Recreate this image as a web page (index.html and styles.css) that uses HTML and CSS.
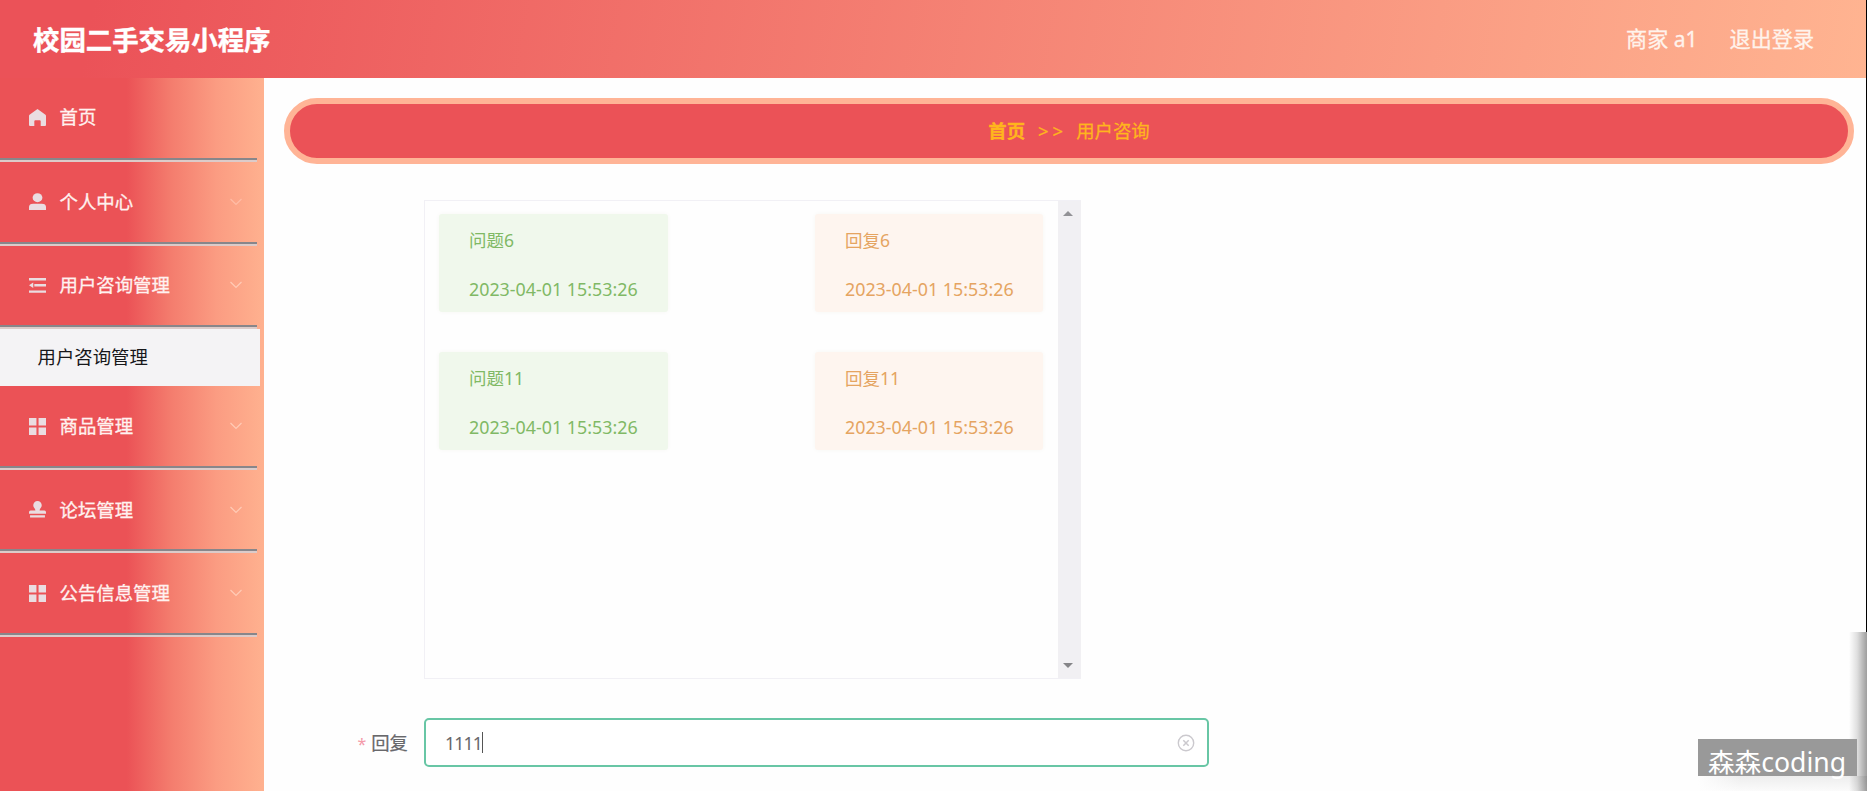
FILE: index.html
```html
<!DOCTYPE html>
<html lang="zh-CN">
<head>
<meta charset="utf-8">
<title>校园二手交易小程序</title>
<link rel="stylesheet" href="styles.css">
</head>
<body>
<svg class="defs" width="0" height="0">
  <symbol id="chevron" viewBox="0 0 14 8"><path d="M1.5 1 7 6.5 12.500 1" fill="none" stroke="currentColor" stroke-width="1.200"/></symbol>
  <symbol id="grid" viewBox="0 0 16 16"><path d="M0 0h7v7H0zM9 0h7v7H9zM0 9h7v7H0zM9 9h7v7H9z" fill="currentColor"/></symbol>
</svg>
<header class="header">
  <h1 class="brand">校园二手交易小程序</h1>
  <nav class="account"><span>商家 a1</span><span>退出登录</span></nav>
</header>
<div class="body">
  <aside class="sidebar">
    <div class="item first"><svg class="icon" viewBox="0 0 16 16"><path d="M8 0 15.500 5.500Q16 6 16 6.700V15q0 1-1 1h-4v-4.500a1 1 0 0 0-1-1H6a1 1 0 0 0-1 1V16H1q-1 0-1-1V6.700Q0 6 .5 5.500z" fill="currentColor"/></svg><span>首页</span></div>
    <div class="item"><svg class="icon" viewBox="0 0 16 17.500" preserveAspectRatio="none"><circle cx="8" cy="4.800" r="4.600" fill="currentColor"/><path d="M0 17.500v-3Q0 11 4 11h8q4 0 4 3.500v3z" fill="currentColor"/></svg><span>个人中心</span><svg class="arrow faint"><use href="#chevron"/></svg></div>
    <div class="item"><svg class="icon" viewBox="0 0 16 16"><path d="M0 1h16v2.200H0zM5 6.700h11v2.200H5zM0 12.600h16v2.200H0zM0 7.800 4 5.200v5.200z" fill="currentColor"/></svg><span>用户咨询管理</span><svg class="arrow"><use href="#chevron"/></svg></div>
    <div class="subitem">用户咨询管理</div>
    <div class="item"><svg class="icon"><use href="#grid"/></svg><span>商品管理</span><svg class="arrow"><use href="#chevron"/></svg></div>
    <div class="item"><svg class="icon" viewBox="0 0 16 16"><path d="M8 0a4 4 0 0 1 4 4c0 2.300-2 3-2 5h4.500Q16 9 16 10.500V12H0v-1.500Q0 9 1.500 9H6c0-2-2-2.700-2-5a4 4 0 0 1 4-4zM1 13.500h14V15.500H1z" fill="currentColor"/></svg><span>论坛管理</span><svg class="arrow"><use href="#chevron"/></svg></div>
    <div class="item"><svg class="icon"><use href="#grid"/></svg><span>公告信息管理</span><svg class="arrow"><use href="#chevron"/></svg></div>
  </aside>
  <main class="main">
    <div class="breadcrumb"><b>首页</b><span class="sep">&gt;&gt;</span><span>用户咨询</span></div>
    <div class="chat">
      <div class="messages">
        <div class="card ask"><p>问题6</p><p class="date">2023-04-01 15:53:26</p></div>
        <div class="card reply"><p>回复6</p><p class="date">2023-04-01 15:53:26</p></div>
        <div class="card ask"><p>问题11</p><p class="date">2023-04-01 15:53:26</p></div>
        <div class="card reply"><p>回复11</p><p class="date">2023-04-01 15:53:26</p></div>
      </div>
      <div class="scrollbar"><i class="up"></i><i class="down"></i></div>
    </div>
    <div class="form-row">
      <label class="label"><span class="star">*</span>回复</label>
      <div class="input"><span>1111</span><i class="caret"></i>
        <svg class="clear" viewBox="0 0 18 18"><g fill="none" stroke="currentColor"><circle cx="9" cy="9" r="7.700" stroke-width="1.400"/><path d="m6.300 6.300 5.400 5.400m0-5.400-5.400 5.400" stroke-width="1.500"/></g></svg>
      </div>
    </div>
  </main>
</div>
<div class="edge-line"></div>
<div class="bottom-shade"></div>
<div class="edge-shadow"></div>
<div class="watermark">森森coding</div>
</body>
</html>
```
FILE: styles.css
```css
* { box-sizing: border-box; }
body {
  margin: 0;
  width: 1867px;
  height: 791px;
  overflow: hidden;
  position: relative;
  background: #fefefe;
  font-family: "Noto Sans", "Noto Sans CJK SC", sans-serif;
  font-size: 18.400px;
}
p, h1 { margin: 0; }
.defs { display: block; position: absolute; }
.header {
  height: 78px;
  padding: 1px 53px 0 33px;
  display: flex;
  align-items: center;
  justify-content: space-between;
  background: linear-gradient(100deg, #eb5258 0%, #eb5258 5%, #ffb491 100%);
  color: #fff;
}
.brand { font-size: 26.400px; line-height: 40px; font-weight: 700; -webkit-text-stroke: .4px #fff; }
.account { display: flex; gap: 32px; padding-bottom: 2px; font-size: 21.100px; line-height: 30px; color: #fff3ec; -webkit-text-stroke: .3px #fff3ec; }
.body { display: flex; height: 713px; }
.sidebar {
  width: 264px;
  flex: none;
  background: linear-gradient(90deg, #eb5256 0%, #eb5256 48%, #f47d6e 65%, #fb9c82 82%, #ffb18f 100%);
}
.item {
  width: 257px;
  height: 83.300px;
  padding: 0 14px 2px 29px;
  display: flex;
  align-items: center;
  color: #fff2f0;
  border-bottom: 2px solid #dccbc9;
  box-shadow: inset 0 -2px #88868a;
  -webkit-text-stroke: .3px #fff2f0;
}
.item span { margin-bottom: 2px; }
.item.first { height: 84.300px; padding-bottom: 4px; }
.icon { width: 17px; height: 17px; margin-right: 13.500px; color: #eadde1; }
.arrow { width: 14px; height: 8px; margin-left: auto; color: #ffcbb6; }
.arrow.faint { color: #ffbca6; }
.subitem {
  width: 260px;
  height: 57px;
  padding-left: 37.500px;
  line-height: 56px;
  background: #f4f3f5;
  color: #17171a;
}
.subitem + .item { height: 84.300px; }
.main { flex: 1; padding: 20px 13px 0 20px; }
.breadcrumb {
  height: 66px;
  padding-bottom: 2px;
  border: 6px solid #ffb496;
  border-radius: 33px;
  background: #eb5257;
  color: #ffb51d;
  display: flex;
  justify-content: center;
  align-items: center;
  -webkit-text-stroke: .3px #ffb51d;
}
.sep { margin: 0 9px 0 13px; letter-spacing: 4px; }
.chat {
  width: 657px;
  height: 479px;
  margin: 36px 0 0 140px;
  display: flex;
  border: 1px solid #f1f0f5;
  border-right: 0;
}
.messages {
  flex: 1;
  display: grid;
  grid-template-columns: 229px 228px;
  grid-auto-rows: 98px;
  column-gap: 147px;
  row-gap: 40px;
  padding: 13px 0 0 14px;
  align-content: start;
}
.card {
  padding: 12px 0 0 30px;
  border-radius: 3px;
  font-size: 17.500px;
  line-height: 28px;
  box-shadow: 0 0 5px #f7f7f4;
}
.card .date { margin-top: 21px; font-size: 17.850px; }
.ask { background: #f0f8ec; color: #80b965; }
.reply { background: #fef5ef; color: #e5a461; }
.scrollbar {
  width: 23px;
  background: #f1f0f3;
  display: flex;
  flex-direction: column;
  justify-content: space-between;
  align-items: center;
  padding: 10px 3px 10px 0;
}
.up, .down { border: 5px solid transparent; border-top-width: 0; border-bottom: 5px solid #929296; }
.down { border-top: 5px solid #858588; border-bottom-width: 0; }
.form-row { display: flex; margin-top: 39px; height: 49px; align-items: center; }
.label { width: 140px; padding: 0 16px 2px 0; text-align: right; color: #68686b; -webkit-text-stroke: .2px #68686b; }
.star { color: #f49aa9; font-size: 16px; margin-right: 5px; -webkit-text-stroke: 0; }
.input {
  width: 785px;
  height: 49px;
  border: 2px solid #68c6a5;
  border-radius: 5px;
  padding: 0 12px 0 19px;
  display: flex;
  align-items: center;
  background: #fff;
  color: #68686b;
  font-size: 17.500px;
}
.input span { letter-spacing: -.8px; }
.caret { width: 1px; height: 21px; background: #555; }
.clear { width: 18px; height: 18px; margin-left: auto; color: #cbc9ce; }
.edge-line { position: absolute; right: 0; top: 0; width: 1px; height: 632px; background: #000; }
.bottom-shade { position: absolute; left: 1698px; top: 776px; width: 169px; height: 15px; background: linear-gradient(90deg, #fefefe, transparent 25%), linear-gradient(#ededed, #fbfbfb); }
.edge-shadow { position: absolute; right: 0; top: 632px; width: 18px; height: 159px; background: linear-gradient(90deg, transparent, rgba(0,0,0,.12) 45%, rgba(0,0,0,.38)); }
.watermark {
  position: absolute;
  left: 1698px;
  top: 739px;
  width: 159px;
  height: 37px;
  padding-left: 10px;
  background: #999;
  color: #fff;
  font-size: 26.600px;
  line-height: 47px;
  white-space: nowrap;
}
```
